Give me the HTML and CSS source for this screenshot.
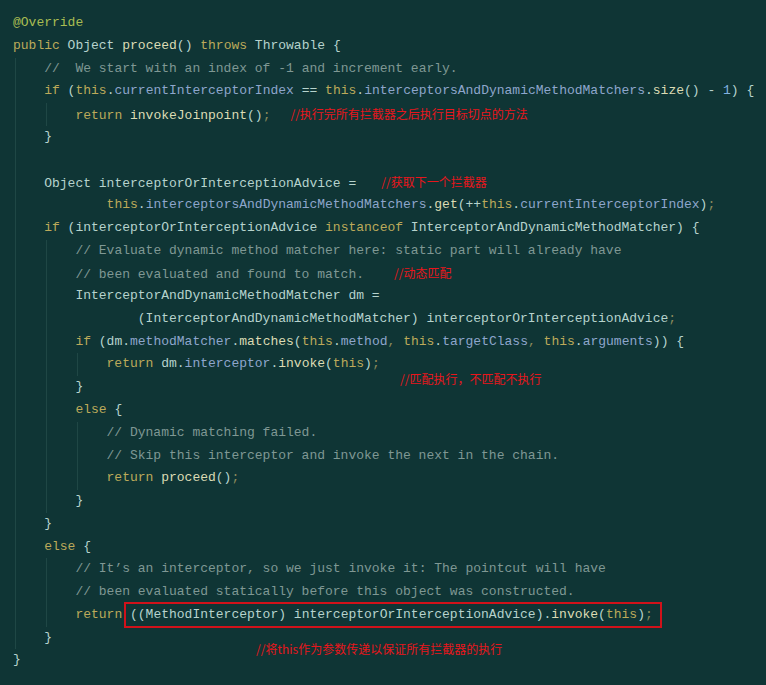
FILE: index.html
```html
<!DOCTYPE html>
<html lang="zh-CN">
<head>
  <meta charset="UTF-8">
  <meta name="viewport" content="width=device-width, initial-scale=1.0">
  <title>ReflectiveMethodInvocation.proceed</title>
  <link rel="stylesheet" href="styles.css">
</head>
<body>
  <div class="code">
    <div class="ln"><span class="a">@Override</span></div>
    <div class="ln"><span class="k">public</span> Object <span class="m">proceed</span>() <span class="k">throws</span> Throwable {</div>
    <div class="ln"><span class="g"></span><span class="c">//  We start with an index of -1 and increment early.</span></div>
    <div class="ln"><span class="g"></span><span class="k">if</span> (<span class="k">this</span>.<span class="f">currentInterceptorIndex</span> == <span class="k">this</span>.<span class="f">interceptorsAndDynamicMethodMatchers</span>.<span class="m">size</span>() - <span class="n">1</span>) {</div>
    <div class="ln"><span class="g"></span><span class="g"></span><span class="k">return</span> <span class="m">invokeJoinpoint</span>()<span class="p">;</span><span class="note note-1">//执行完所有拦截器之后执行目标切点的方法</span></div>
    <div class="ln"><span class="g"></span>}</div>
    <div class="ln"><span class="g"></span></div>
    <div class="ln"><span class="g"></span>Object interceptorOrInterceptionAdvice =<span class="note note-2">//获取下一个拦截器</span></div>
    <div class="ln"><span class="g"></span>        <span class="k">this</span>.<span class="f">interceptorsAndDynamicMethodMatchers</span>.<span class="m">get</span>(++<span class="k">this</span>.<span class="f">currentInterceptorIndex</span>)<span class="p">;</span></div>
    <div class="ln"><span class="g"></span><span class="k">if</span> (interceptorOrInterceptionAdvice <span class="k">instanceof</span> InterceptorAndDynamicMethodMatcher) {</div>
    <div class="ln"><span class="g"></span><span class="g"></span><span class="c">// Evaluate dynamic method matcher here: static part will already have</span></div>
    <div class="ln"><span class="g"></span><span class="g"></span><span class="c">// been evaluated and found to match.</span><span class="note note-3">//动态匹配</span></div>
    <div class="ln"><span class="g"></span><span class="g"></span>InterceptorAndDynamicMethodMatcher dm =</div>
    <div class="ln"><span class="g"></span><span class="g"></span>        (InterceptorAndDynamicMethodMatcher) interceptorOrInterceptionAdvice<span class="p">;</span></div>
    <div class="ln"><span class="g"></span><span class="g"></span><span class="k">if</span> (dm.<span class="f">methodMatcher</span>.<span class="m">matches</span>(<span class="k">this</span>.<span class="f">method</span><span class="p">,</span> <span class="k">this</span>.<span class="f">targetClass</span><span class="p">,</span> <span class="k">this</span>.<span class="f">arguments</span>)) {</div>
    <div class="ln"><span class="g"></span><span class="g"></span><span class="g"></span><span class="k">return</span> dm.<span class="f">interceptor</span>.<span class="m">invoke</span>(<span class="k">this</span>)<span class="p">;</span></div>
    <div class="ln"><span class="g"></span><span class="g"></span>}<span class="note note-4">//匹配执行，不匹配不执行</span></div>
    <div class="ln"><span class="g"></span><span class="g"></span><span class="k">else</span> {</div>
    <div class="ln"><span class="g"></span><span class="g"></span><span class="g"></span><span class="c">// Dynamic matching failed.</span></div>
    <div class="ln"><span class="g"></span><span class="g"></span><span class="g"></span><span class="c">// Skip this interceptor and invoke the next in the chain.</span></div>
    <div class="ln"><span class="g"></span><span class="g"></span><span class="g"></span><span class="k">return</span> <span class="m">proceed</span>()<span class="p">;</span></div>
    <div class="ln"><span class="g"></span><span class="g"></span>}</div>
    <div class="ln"><span class="g"></span>}</div>
    <div class="ln"><span class="g"></span><span class="k">else</span> {</div>
    <div class="ln"><span class="g"></span><span class="g"></span><span class="c">// It’s an interceptor, so we just invoke it: The pointcut will have</span></div>
    <div class="ln"><span class="g"></span><span class="g"></span><span class="c">// been evaluated statically before this object was constructed.</span></div>
    <div class="ln"><span class="g"></span><span class="g"></span><span class="k">return</span> <span class="box">((MethodInterceptor) interceptorOrInterceptionAdvice).<span class="m">invoke</span>(<span class="k">this</span>)<span class="p">;</span></span></div>
    <div class="ln"><span class="g"></span>}</div>
    <div class="ln">}<span class="note note-5">//将this作为参数传递以保证所有拦截器的执行</span></div>
  </div>
</body>
</html>
```

FILE: styles.css
```css
body {
  margin: 0;
  background-color: #0f3535;
}

.code {
  min-height: 685px;
  box-sizing: border-box;
  padding: 12px 0 0 13px;
  font-family: "Liberation Mono", "DejaVu Sans Mono", monospace;
  font-size: 13px;
  color: #b6d3cd;
}

.ln {
  position: relative;
  height: 22.78px;
  line-height: 22.78px;
  white-space: pre;
}

/* indent guide, 4 columns wide */
.g {
  display: inline-block;
  vertical-align: top;
  width: 28.2px;
  height: 22.78px;
  margin-left: 2px;
  border-left: 1px solid #1f4745;
}

.a { color: #a9bd52; }
.k { color: #bcaa5a; }
.m { color: #dcdcb4; }
.f { color: #8ea6cc; }
.c { color: #7f9894; }
.n { color: #82b2e0; }
.p { color: #8b8a5c; }

.note {
  font-family: "Noto Sans CJK SC", sans-serif;
  font-size: 12px;
  color: #e8161c;
}

.note-1 { margin-left: 20px; }
.note-2 { margin-left: 25px; }
.note-3 { margin-left: 30px; }

.note-4 {
  position: absolute;
  left: 387px;
  top: -8px;
}

.note-5 {
  position: absolute;
  left: 243px;
  top: -11px;
}

.box {
  margin-left: -6px;
  padding: 3px 7px 4px 4px;
  border: 2px solid #d0121a;
}
```
